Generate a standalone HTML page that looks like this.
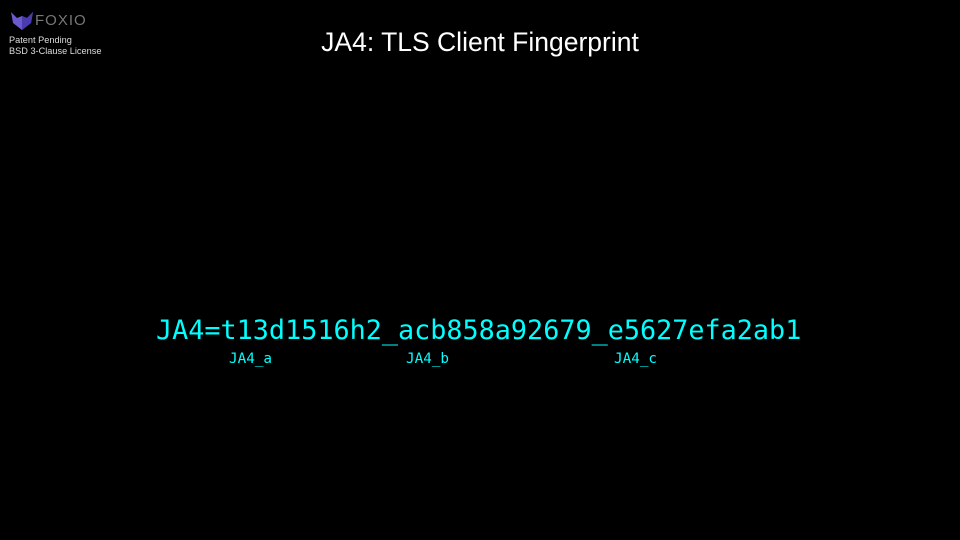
<!DOCTYPE html>
<html><head><style>
body{margin:0;width:960px;height:540px;background:#000;overflow:hidden;position:relative;font-family:"Liberation Sans",sans-serif}
.a{position:absolute;white-space:nowrap}
.m{font-family:"DejaVu Sans Mono","Liberation Mono",monospace;color:#00ffff}
</style></head><body>
<svg class="a" style="left:11px;top:12px" width="22" height="18" viewBox="0 0 22 18">
<path d="M0 0 L6 6 L11 4 L16 6 L22 0 L20 11 L11 18 L2 11 Z" fill="#6a5acd"/>
<path d="M11 4 L16 6 L22 0 L20 11 L11 18 Z" fill="#4b3bb0"/>
</svg>
<div class="a" style="left:35px;top:12px;font-size:15px;color:#777;letter-spacing:1px">FOXIO</div>
<div class="a" style="left:9px;top:35px;font-size:9.2px;color:#ddd;line-height:11px">Patent Pending<br>BSD 3-Clause License</div>
<div class="a" style="left:0;width:960px;text-align:center;top:27px;font-size:26.5px;color:#fff">JA4: TLS Client Fingerprint</div>
<div class="a m" style="left:156px;top:315px;font-size:26.8px">JA4=t13d1516h2_acb858a92679_e5627efa2ab1</div>
<div class="a m" style="left:229px;top:351px;font-size:14.3px">JA4_a</div>
<div class="a m" style="left:406px;top:351px;font-size:14.3px">JA4_b</div>
<div class="a m" style="left:614px;top:351px;font-size:14.3px">JA4_c</div>
</body></html>
